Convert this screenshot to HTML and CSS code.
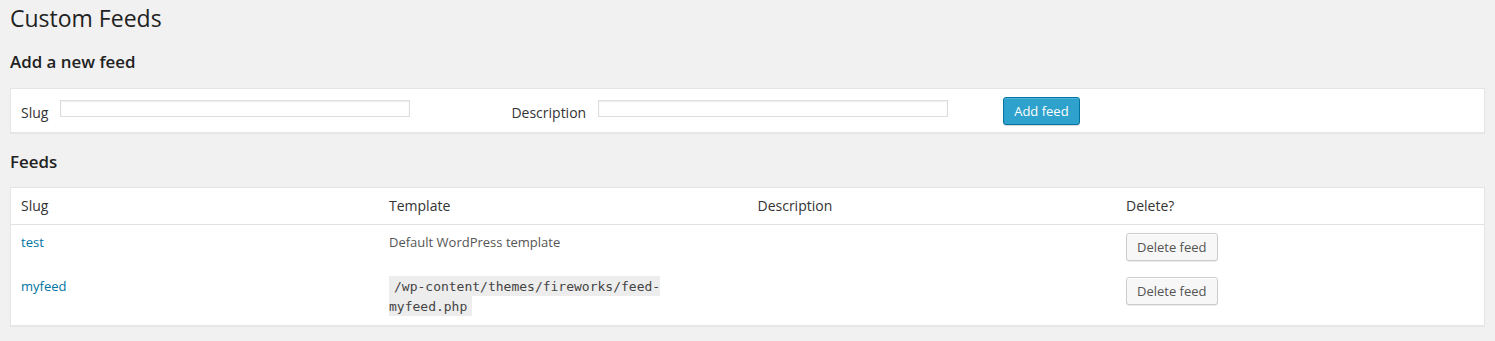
FILE: index.html
```html
<!DOCTYPE html>
<html lang="en">
<head>
<meta charset="utf-8">
<title>Custom Feeds</title>
<link rel="stylesheet" href="styles.css">
</head>
<body>
<div class="wrap">
  <h1 class="page-title">Custom Feeds</h1>

  <h2 class="section-title">Add a new feed</h2>
  <form class="add-box">
    <div class="field field-slug">
      <label class="field-label" for="slug">Slug</label>
      <input class="text-input" id="slug" type="text">
    </div>
    <div class="field field-desc">
      <label class="field-label" for="desc">Description</label>
      <input class="text-input" id="desc" type="text">
    </div>
    <button class="button button-primary" type="button">Add feed</button>
  </form>

  <h2 class="section-title section-feeds">Feeds</h2>
  <table class="feeds-table">
    <thead>
      <tr>
        <th>Slug</th>
        <th>Template</th>
        <th>Description</th>
        <th>Delete?</th>
      </tr>
    </thead>
    <tbody>
      <tr>
        <td><a class="feed-link" href="#">test</a></td>
        <td>Default WordPress template</td>
        <td></td>
        <td><button class="button" type="button">Delete feed</button></td>
      </tr>
      <tr>
        <td><a class="feed-link" href="#">myfeed</a></td>
        <td><code class="path">/wp-content/themes/fireworks/feed-myfeed.php</code></td>
        <td></td>
        <td><button class="button" type="button">Delete feed</button></td>
      </tr>
    </tbody>
  </table>
</div>
</body>
</html>
```

FILE: styles.css
```css
html, body {
  margin: 0;
  padding: 0;
  background: #f1f1f1;
}

body {
  font-family: "Open Sans", "Liberation Sans", sans-serif;
  font-size: 13px;
  color: #444;
}

.wrap {
  padding: 0 10px 20px 10px;
}

.page-title {
  margin: 0;
  padding: 4px 0 0 0;
  font-size: 23px;
  font-weight: 400;
  line-height: 29px;
  color: #222;
}

.section-title {
  margin: 19px 0 16px 0;
  font-size: 16.9px;
  font-weight: 600;
  line-height: 20px;
  color: #222;
}

.section-feeds {
  margin: 19px 0 15px 0;
}

.add-box {
  display: flex;
  align-items: flex-start;
  margin: 0;
  padding: 8px 10px 7px 10px;
  background: #fff;
  border: 1px solid #e5e5e5;
  box-shadow: 0 1px 1px rgba(0, 0, 0, 0.04);
}

.field {
  display: flex;
  align-items: flex-start;
  gap: 12px;
}

.field-slug {
  margin-right: 101px;
}

.field-desc {
  margin-right: 55px;
}

.field-label {
  margin-top: 6px;
  font-size: 14px;
  line-height: 19.6px;
  color: #333;
}

.text-input {
  box-sizing: border-box;
  width: 350px;
  height: 17px;
  margin: 3px 0 0 0;
  padding: 0 5px;
  border: 1px solid #ddd;
  background: #fff;
  box-shadow: inset 0 1px 2px rgba(0, 0, 0, 0.07);
  font-family: inherit;
  font-size: 13px;
}

.button {
  box-sizing: border-box;
  display: inline-block;
  height: 28px;
  margin: 0;
  padding: 0 10px 1px;
  font-family: "Open Sans", "Liberation Sans", sans-serif;
  font-size: 13px;
  line-height: 26px;
  white-space: nowrap;
  color: #555;
  background: #f7f7f7;
  border: 1px solid #ccc;
  border-radius: 3px;
  box-shadow: inset 0 1px 0 #fff, 0 1px 0 rgba(0, 0, 0, 0.08);
  cursor: pointer;
  vertical-align: top;
}

.button-primary {
  color: #fff;
  background: #2ea2cc;
  border-color: #0074a2;
  box-shadow: inset 0 1px 0 rgba(120, 200, 230, 0.5), 0 1px 0 rgba(0, 0, 0, 0.15);
}

.feeds-table {
  width: 100%;
  table-layout: fixed;
  border-collapse: collapse;
  border-spacing: 0;
  background: #fff;
  border: 1px solid #e5e5e5;
  box-shadow: 0 1px 1px rgba(0, 0, 0, 0.04);
}

.feeds-table th {
  padding: 8px 10px;
  font-size: 14px;
  font-weight: 400;
  line-height: 19.6px;
  text-align: left;
  color: #333;
  border-bottom: 1px solid #e1e1e1;
}

.feeds-table td {
  padding: 8px 10px;
  font-size: 13px;
  line-height: 19.5px;
  vertical-align: top;
  color: #555;
}

.feed-link {
  color: #0074a2;
  text-decoration: none;
}

.path {
  padding: 3px 5px 2px;
  font-family: "DejaVu Sans Mono", "Liberation Mono", monospace;
  font-size: 13px;
  line-height: 20px;
  color: #444;
  background: rgba(0, 0, 0, 0.07);
}
```
